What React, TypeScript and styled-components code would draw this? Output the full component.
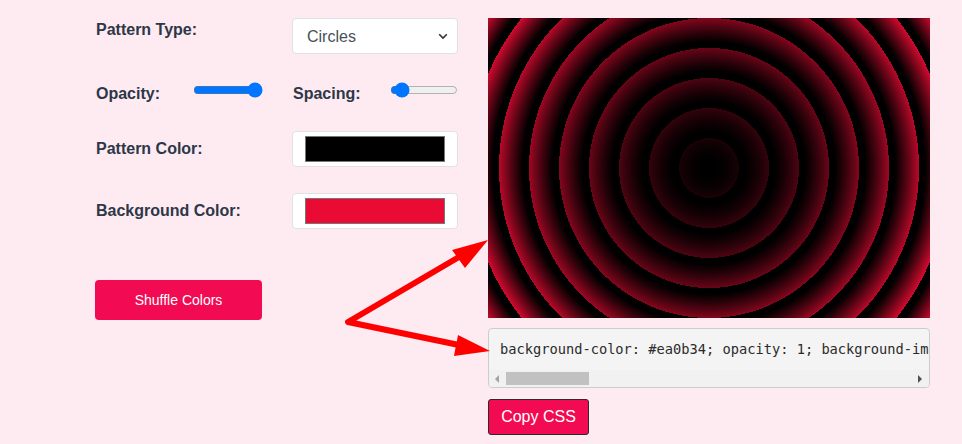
import { useState } from 'react';
import styled, { createGlobalStyle } from 'styled-components';

const PINK = '#f20a52';

const GlobalStyle = createGlobalStyle`
  body {
    margin: 0;
    background-color: #fdebf1;
    font-family: 'Liberation Sans', Arial, sans-serif;
  }
`;

const cssText = (bg: string, fg: string, opacity: number, spacing: number) =>
  `background-color: ${bg}; opacity: ${opacity}; background-image: radial-gradient(circle at center center, ${fg}, ${bg}), repeating-radial-gradient(circle at center center, ${fg}, ${fg}, ${spacing}px, transparent ${spacing * 2}px, transparent ${spacing}px); background-blend-mode: multiply;`;

const App = () => {
  const [patternColor] = useState('#000000');
  const [bgColor] = useState('#ea0b34');
  const spacing = 15;

  return (
    <>
      <GlobalStyle />
      <Page>
        <Controls>
          <Row $top={18}>
            <Label $start>Pattern Type:</Label>
            <SelectWrap>
              <Select defaultValue="circles">
                <option value="circles">Circles</option>
                <option value="lines">Lines</option>
                <option value="dots">Dots</option>
              </Select>
              <Chevron width="10" height="7" viewBox="0 0 10 7">
                <path d="M1.2 1.2 L5 5 L8.8 1.2" fill="none" stroke="#333" strokeWidth="1.6" />
              </Chevron>
            </SelectWrap>
          </Row>

          <Row $top={20}>
            <SliderGroup>
              <SliderLabel>Opacity:</SliderLabel>
              <Slider type="range" min={0} max={1} step={0.1} defaultValue={1} $width={70} />
            </SliderGroup>
            <SliderGroup>
              <SliderLabel>Spacing:</SliderLabel>
              <Slider type="range" min={5} max={100} defaultValue={12} $width={68} />
            </SliderGroup>
          </Row>

          <Row $top={21}>
            <Label>Pattern Color:</Label>
            <ColorInput type="color" defaultValue={patternColor} />
          </Row>

          <Row $top={26}>
            <Label>Background Color:</Label>
            <ColorInput type="color" defaultValue={bgColor} />
          </Row>

          <ShuffleButton>Shuffle Colors</ShuffleButton>
        </Controls>

        <PreviewColumn>
          <Preview $bg={bgColor} $fg={patternColor} $spacing={spacing} />
          <CodeBox>
            <CodeText>{cssText(bgColor, patternColor, 1, spacing)}</CodeText>
            <ScrollBar>
              <ScrollArrow>
                <svg width="5" height="8" viewBox="0 0 5 8">
                  <polygon points="4,0 4,8 0,4" fill="#a3a3a3" />
                </svg>
              </ScrollArrow>
              <ScrollTrack>
                <ScrollThumb />
              </ScrollTrack>
              <ScrollArrow>
                <svg width="5" height="8" viewBox="0 0 5 8">
                  <polygon points="0,0 0,8 4,4" fill="#505050" />
                </svg>
              </ScrollArrow>
            </ScrollBar>
          </CodeBox>
          <CopyButton>Copy CSS</CopyButton>
        </PreviewColumn>

        <Annotation width="962" height="444" viewBox="0 0 962 444">
          <polyline
            points="459,257 348,322 459,345"
            fill="none"
            stroke="#ff0000"
            strokeWidth="6"
            strokeLinejoin="round"
            strokeLinecap="round"
          />
          <polygon points="488,240 452,250 465,268" fill="#ff0000" />
          <polygon points="490,351 458,335 454,356" fill="#ff0000" />
        </Annotation>
      </Page>
    </>
  );
};

const Page = styled.main`
  position: relative;
  display: flex;
  gap: 30px;

  width: 962px;
  height: 444px;
  padding-left: 95px;
  box-sizing: border-box;
  overflow: hidden;
`;

const Controls = styled.section`
  display: flex;
  flex-direction: column;
  width: 363px;
`;

const Row = styled.div<{ $top: number }>`
  display: flex;
  align-items: center;
  justify-content: space-between;

  height: 36px;
  margin-top: ${({ $top }) => $top}px;
  padding-left: 1px;
`;

const Label = styled.label<{ $start?: boolean }>`
  align-self: ${({ $start }) => ($start ? 'flex-start' : 'center')};
  padding-top: ${({ $start }) => ($start ? '3px' : '0')};

  font-size: 16px;
  font-weight: 700;
  line-height: 18px;
  color: #2d3748;
`;

const SliderGroup = styled.div`
  display: flex;
  align-items: center;
  padding-top: 4px;
`;

const SliderLabel = styled(Label)`
  width: 97px;
`;

const Slider = styled.input<{ $width: number }>`
  width: ${({ $width }) => $width}px;
  margin: 0 0 8px;
  accent-color: #0075ff;
`;

const SelectWrap = styled.div`
  position: relative;
  width: 166px;
  height: 36px;
`;

const Select = styled.select`
  appearance: none;
  width: 100%;
  height: 100%;
  padding: 0 30px 0 14px;

  font-family: 'Liberation Sans', Arial, sans-serif;
  font-size: 16px;
  color: #495057;

  background-color: #fff;
  border: 1px solid #dee2e6;
  border-radius: 4px;
  outline: none;
`;

const Chevron = styled.svg`
  position: absolute;
  top: 15px;
  right: 10px;
  pointer-events: none;
`;

const ColorInput = styled.input`
  appearance: none;
  width: 166px;
  height: 36px;
  padding: 4px 12px;
  box-sizing: border-box;

  background-color: #fff;
  border: 1px solid #dee2e6;
  border-radius: 4px;
  cursor: pointer;

  &::-webkit-color-swatch-wrapper {
    padding: 0;
  }

  &::-webkit-color-swatch {
    border: 1px solid #767676;
    border-radius: 0;
  }
`;

const ShuffleButton = styled.button`
  width: 167px;
  height: 40px;
  margin-top: 51px;

  font-family: 'Liberation Sans', Arial, sans-serif;
  font-size: 14px;
  color: #fff;

  background-color: ${PINK};
  border: none;
  border-radius: 4px;
  cursor: pointer;
`;

const PreviewColumn = styled.section`
  display: flex;
  flex-direction: column;
  align-items: flex-start;
  width: 442px;
  padding-top: 18px;
`;

const Preview = styled.div<{ $bg: string; $fg: string; $spacing: number }>`
  width: 442px;
  height: 300px;

  background-color: ${({ $bg }) => $bg};
  background-image: repeating-radial-gradient(
      circle at center center,
      ${({ $fg }) => $fg} 0,
      ${({ $fg }) => $fg} ${({ $spacing }) => $spacing * 0.4}px,
      transparent ${({ $spacing }) => $spacing * 2}px
    ),
    radial-gradient(circle at center center, ${({ $fg }) => $fg}, ${({ $bg }) => $bg});
`;

const CodeBox = styled.div`
  display: flex;
  flex-direction: column;
  width: 442px;
  margin-top: 10px;
  box-sizing: border-box;
  overflow: hidden;

  background-color: #f4f4f4;
  border: 1px solid #cccccc;
  border-radius: 4px;
`;

const CodeText = styled.pre`
  margin: 0;
  padding: 10px 11px 11px;
  overflow: hidden;

  font-family: 'DejaVu Sans Mono', 'Liberation Mono', monospace;
  font-size: 13.7px;
  line-height: 20px;
  color: #2b2b2b;
  white-space: pre;
`;

const ScrollBar = styled.div`
  display: flex;
  height: 17px;
  background-color: #f1f1f1;
`;

const ScrollArrow = styled.div`
  display: flex;
  align-items: center;
  justify-content: center;
  width: 17px;
  flex-shrink: 0;
`;

const ScrollTrack = styled.div`
  flex: 1;
  padding: 2px 0;
`;

const ScrollThumb = styled.div`
  width: 83px;
  height: 100%;
  background-color: #c1c1c1;
`;

const CopyButton = styled.button`
  width: 101px;
  height: 36px;
  margin-top: 11px;

  font-family: 'Liberation Sans', Arial, sans-serif;
  font-size: 16px;
  color: #fff;

  background-color: ${PINK};
  border: 1px solid #2a2a2a;
  border-radius: 3px;
  cursor: pointer;
`;

const Annotation = styled.svg`
  position: absolute;
  top: 0;
  left: 0;
  pointer-events: none;
`;

export default App;
